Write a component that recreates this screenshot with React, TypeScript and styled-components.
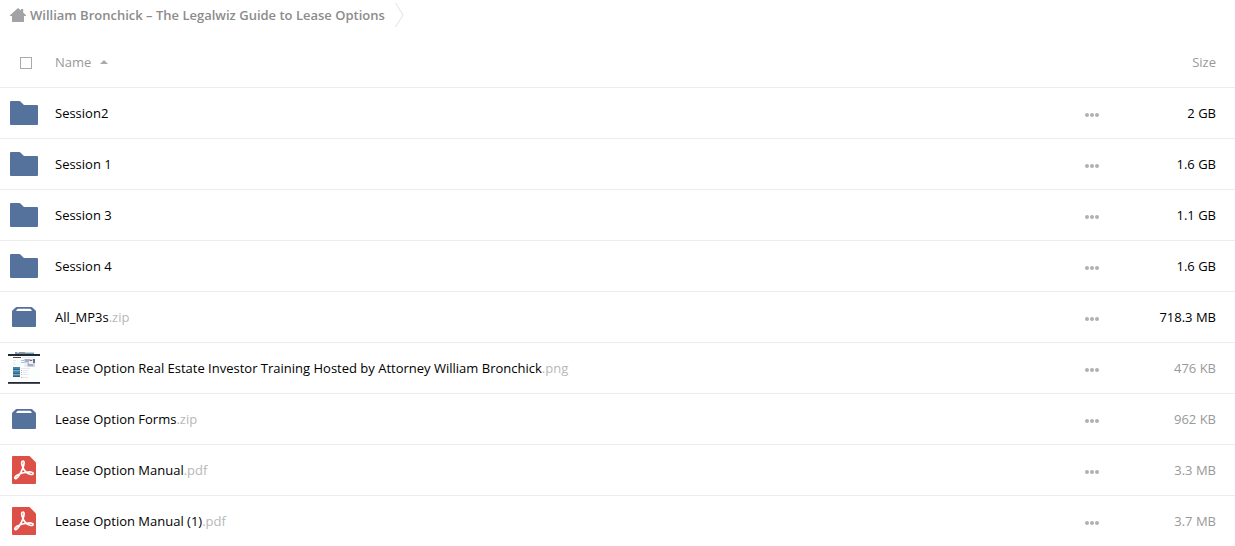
import React, { useState } from "react";
import styled, { createGlobalStyle } from "styled-components";

const GlobalStyle = createGlobalStyle`
  *, *::before, *::after { box-sizing: border-box; }
  body {
    margin: 0;
    background: #fff;
    color: #000;
    font-family: "Open Sans", "Noto Sans", sans-serif;
    font-size: 13px;
    line-height: 18px;
  }
`;

const Page = styled.main`
  width: 100%;
  overflow: hidden;
`;

const Breadcrumbs = styled.nav`
  display: flex;
  align-items: center;
  height: 37px;
  padding: 0 10px 8px;
`;

const Crumb = styled.a`
  display: flex;
  align-items: center;
  gap: 4px;
  color: #8c8c8c;
  font-weight: 600;
  text-decoration: none;
  white-space: nowrap;
`;

const CrumbArrow = styled.svg`
  flex: none;
  margin-left: 10px;
`;

const FileTable = styled.table`
  width: 100%;
  border-collapse: separate;
  border-spacing: 0;
  table-layout: fixed;
`;

const Row = styled.tr`
  height: 51px;
`;

const Cell = styled.td<{ $muted?: boolean; $align?: "left" | "right" }>`
  padding: 0;
  border-bottom: 1px solid #ececec;
  color: ${(p) => (p.$muted ? "#999" : "#000")};
  font-weight: 400;
  text-align: ${(p) => p.$align ?? "left"};
  vertical-align: middle;
  white-space: nowrap;
`;

const IconCell = styled(Cell)`
  width: 55px;
`;

const ActionCell = styled(Cell)`
  width: 42px;
`;

const SizeCell = styled(Cell)`
  width: 108px;
  padding-right: 19px;
`;

const IconBox = styled.div`
  display: flex;
  align-items: center;
  justify-content: center;
  width: 48px;
  height: 50px;
`;

const SelectAll = styled.input`
  appearance: none;
  display: block;
  width: 12px;
  height: 12px;
  margin: 2px 0 0 20px;
  border: 1px solid #aaa;
  background: #fff;

  &:checked {
    background: #54729b;
  }
`;

const SortButton = styled.button`
  display: flex;
  align-items: center;
  gap: 9px;
  padding: 0;
  border: 0;
  background: none;
  color: inherit;
  font: inherit;
  cursor: pointer;
`;

const FileLink = styled.a`
  color: #000;
  text-decoration: none;
`;

const Extension = styled.span`
  color: #b8b8b8;
`;

const MoreButton = styled.button`
  display: flex;
  align-items: center;
  width: 14px;
  height: 20px;
  margin-top: 3px;
  padding: 0;
  border: 0;
  background: none;
  cursor: pointer;
`;

const HomeIcon = () => (
  <svg width="16" height="14" viewBox="0 0 16 14" aria-hidden="true">
    <path
      fill="#a3a3a3"
      d="M8 0 11 2.6V1h2.2v3.600L16 7.2V8h-2v5.400q0 .6-.6.600H2.600q-.6 0-.6-.6V8H0v-.8z"
    />
  </svg>
);

const FolderIcon = () => (
  <svg width="28" height="24" viewBox="0 0 28 24" aria-hidden="true">
    <path
      fill="#54729b"
      d="M1 0h8.4q.6 0 1 .4L14 4h13q1 0 1 1v18q0 1-1 1H1q-1 0-1-1V1q0-1 1-1z"
    />
  </svg>
);

const ArchiveIcon = () => (
  <svg width="24" height="20" viewBox="0 0 24 20" aria-hidden="true">
    <path
      fill="#54729b"
      fillRule="evenodd"
      d="M4.600 0h14.800q.6 0 1 .4L23.600 3.600q.4.4.4 1V19q0 1-1 1H1q-1 0-1-1V4.600q0-.6.4-1L3.600.4q.4-.4 1-.4zM6 1.800q-.5 0-.9.500L4 4h16l-1.100-1.700q-.4-.5-.9-.5z"
    />
  </svg>
);

const PdfIcon = () => (
  <svg width="24" height="28" viewBox="0 0 24 28" aria-hidden="true">
    <path
      fill="#dc5047"
      d="M1 0h16.500L24 6.500V27q0 1-1 1H1q-1 0-1-1V1q0-1 1-1z"
    />
    <path
      fill="none"
      stroke="#fff"
      strokeWidth="1.700"
      strokeLinejoin="round"
      d="M10.900 5c-1.200 0-1.500 1.600-1 3.500 1 4 4 8.600 8.200 9.800 1.800.5 3.100.1 3.100-.8 0-1.200-2-1.700-5-1.500-3.700.2-8 1.400-11.200 3.300-1.800 1.100-2.600 2.300-2.100 3 .6.9 2.400-.2 4-2.700 2.500-3.800 4.900-9.300 5.200-12.400.1-1.400-.3-2.200-1.200-2.200z"
    />
  </svg>
);

const PageThumbnail = () => (
  <svg width="32" height="32" viewBox="0 0 32 32" aria-hidden="true">
    <path fill="#fcfdfd" d="M0 0h32v32H0z" />
    <path fill="#c3d3de" d="M7 0h19v1H7z" />
    <path fill="#b5838a" d="M7 0h2v1H7zM11 0h6v1h-6z" />
    <path fill="#6e9db4" d="M7 1h19v1H7z" />
    <path fill="#222934" d="M0 2h32v2H0z" />
    <path fill="#4c5055" d="M5 5h8v1H5z" />
    <path fill="#e6eaed" d="M5 8h3v1H5zM5 10h2v1H5zM5 12h3v1H5zM14 5h13v1H14z" />
    <path fill="#9fcbe4" d="M13 8h3v1h-3zM13 10h3v1h-3z" />
    <path fill="#cfd3e2" d="M16 7h11v8H16z" />
    <path fill="#a7adc6" d="M17 7h5v3h-5zM20 11h5v3h-5z" />
    <path fill="#eff0f6" d="M21 9h4v3h-4zM16 11h3v4h-3z" />
    <path fill="#656f89" d="M25 7h2v4h-2zM22 8h2v1h-2z" />
    <path fill="#4385a8" d="M5 15h7v3H5zM5 19h7v3H5zM5 23h7v2H5z" />
    <path fill="#2d6585" d="M5 17h7v1H5zM5 21h7v1H5zM5 24h7v1H5z" />
    <path fill="#7badc7" d="M5 18h7v1H5zM5 22h7v1H5z" />
    <path fill="#e1a0a5" d="M13 18h1v1h-1zM13 20h1v1h-1zM13 22h1v1h-1zM13 25h1v1h-1z" />
    <path fill="#e4e8ec" d="M13 16h9v1h-9zM15 18h5v1h-5zM15 20h4v1h-4zM15 22h5v1h-5zM14 25h6v1h-6z" />
    <path fill="#222934" d="M0 30h32v1H0z" />
    <path fill="#4c525c" d="M0 31h32v1H0z" />
  </svg>
);

const SortArrow = () => (
  <svg width="8" height="4" viewBox="0 0 8 4" aria-hidden="true">
    <path fill="#aaa" d="M4 0 8 4H0z" />
  </svg>
);

const DotsIcon = () => (
  <svg width="14" height="4" viewBox="0 0 14 4" aria-hidden="true">
    <g fill="#b0b0b0">
      <circle cx="2" cy="2" r="2" />
      <circle cx="7" cy="2" r="2" />
      <circle cx="12" cy="2" r="2" />
    </g>
  </svg>
);

const icons = {
  folder: FolderIcon,
  archive: ArchiveIcon,
  image: PageThumbnail,
  pdf: PdfIcon,
};

type FileEntry = {
  kind: keyof typeof icons;
  name: string;
  ext?: string;
  size: string;
  small?: boolean;
};

const files: FileEntry[] = [
  { kind: "folder", name: "Session2", size: "2 GB" },
  { kind: "folder", name: "Session 1", size: "1.6 GB" },
  { kind: "folder", name: "Session 3", size: "1.1 GB" },
  { kind: "folder", name: "Session 4", size: "1.6 GB" },
  { kind: "archive", name: "All_MP3s", ext: ".zip", size: "718.3 MB" },
  {
    kind: "image",
    name: "Lease Option Real Estate Investor Training Hosted by Attorney William Bronchick",
    ext: ".png",
    size: "476 KB",
    small: true,
  },
  { kind: "archive", name: "Lease Option Forms", ext: ".zip", size: "962 KB", small: true },
  { kind: "pdf", name: "Lease Option Manual", ext: ".pdf", size: "3.3 MB", small: true },
  { kind: "pdf", name: "Lease Option Manual (1)", ext: ".pdf", size: "3.7 MB", small: true },
];

export default function App() {
  const [allSelected, setAllSelected] = useState(false);

  return (
    <Page>
      <GlobalStyle />
      <Breadcrumbs aria-label="Breadcrumb">
        <Crumb href="#">
          <HomeIcon />
          William Bronchick – The Legalwiz Guide to Lease Options
        </Crumb>
        <CrumbArrow width="9" height="26" viewBox="0 0 9 26" aria-hidden="true">
          <path fill="none" stroke="#e0e0e0" d="M.5 1 8 13 .5 25" />
        </CrumbArrow>
      </Breadcrumbs>
      <FileTable>
        <thead>
          <Row>
            <IconCell as="th" $muted>
              <SelectAll
                type="checkbox"
                aria-label="Select all"
                checked={allSelected}
                onChange={(e) => setAllSelected(e.target.checked)}
              />
            </IconCell>
            <Cell as="th" scope="col" aria-sort="ascending" $muted>
              <SortButton type="button">
                Name
                <SortArrow />
              </SortButton>
            </Cell>
            <ActionCell as="th" />
            <SizeCell as="th" scope="col" $muted $align="right">
              Size
            </SizeCell>
          </Row>
        </thead>
        <tbody>
          {files.map((file) => {
            const Icon = icons[file.kind];
            return (
              <Row key={file.name}>
                <IconCell>
                  <IconBox>
                    <Icon />
                  </IconBox>
                </IconCell>
                <Cell>
                  <FileLink href="#">
                    {file.name}
                    {file.ext && <Extension>{file.ext}</Extension>}
                  </FileLink>
                </Cell>
                <ActionCell>
                  <MoreButton type="button" aria-label={`More actions for ${file.name}`}>
                    <DotsIcon />
                  </MoreButton>
                </ActionCell>
                <SizeCell $muted={file.small} $align="right">
                  {file.size}
                </SizeCell>
              </Row>
            );
          })}
        </tbody>
      </FileTable>
    </Page>
  );
}
